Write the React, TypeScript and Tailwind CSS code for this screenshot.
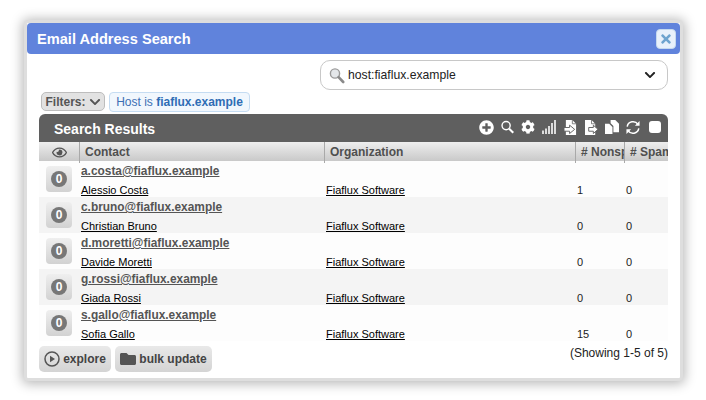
import React from "react";
import { FaChevronDown, FaCog, FaFolder, FaPlusCircle, FaRegEye, FaTimes } from "react-icons/fa";

const contacts = [
  { email: "a.costa@fiaflux.example", name: "Alessio Costa", nonspam: "1", spam: "0" },
  { email: "c.bruno@fiaflux.example", name: "Christian Bruno", nonspam: "0", spam: "0" },
  { email: "d.moretti@fiaflux.example", name: "Davide Moretti", nonspam: "0", spam: "0" },
  { email: "g.rossi@fiaflux.example", name: "Giada Rossi", nonspam: "0", spam: "0" },
  { email: "s.gallo@fiaflux.example", name: "Sofia Gallo", nonspam: "15", spam: "0" },
];

const columns = "grid grid-cols-[40px_245px_251px_49px_44px]";

const Glass = () => (
  <svg width="16" height="17" viewBox="0 0 16 17" className="shrink-0">
    <circle cx="6" cy="6.5" r="4.6" fill="#e4e7ea" stroke="#9a9a9a" strokeWidth="1.4" />
    <path d="M9.6 10.2 14.2 15" stroke="#8a8a8a" strokeWidth="2.6" strokeLinecap="round" />
  </svg>
);

const Signal = () => (
  <svg width="14" height="14" viewBox="0 0 14 14" fill="#dcdcdc">
    <path d="M0 10.500h2V14H0zM3 8.500h2V14H3zM6 6h2v8H6zM9 3h2v11H9zM12 0h2v14h-2z" />
  </svg>
);

const FileIn = () => (
  <svg width="13" height="15" viewBox="0 0 14 16" className="ml-[1px]">
    <path d="M2 0h7l4 4v12H2z" fill="#fff" />
    <path d="M9 0v4h4" fill="none" stroke="#5f5f5f" strokeWidth="0.800" />
    <path d="M0 8h6V5.500L11.500 10 6 14.500V12H0z" fill="#fff" stroke="#5f5f5f" strokeWidth="1" />
  </svg>
);

const FileOut = () => (
  <svg width="13" height="15" viewBox="0 0 14 16" className="ml-[1px]">
    <path d="M0 0h7l4 4v12H0z" fill="#fff" />
    <path d="M7 0v4h4" fill="none" stroke="#5f5f5f" strokeWidth="0.800" />
    <path d="M4 8h5V5.500L14 10l-5 4.500V12H4z" fill="#fff" stroke="#5f5f5f" strokeWidth="1" />
  </svg>
);

const Copies = () => (
  <svg width="14" height="14" viewBox="0 0 15 15" fill="#fff">
    <path d="M0 4h4.500L8 7.500V15H0z" />
    <path d="M6 0h5l4 4v9H9V6.500L6 3.500z" />
  </svg>
);

const Refresh = () => (
  <svg width="14" height="15" viewBox="0 0 15 15" fill="none" stroke="#fff" strokeWidth="1.600">
    <path d="M12.800 4.200A6.300 6.300 0 0 0 1.300 6.500" />
    <path d="M2.200 10.800A6.300 6.300 0 0 0 13.700 8.500" />
    <path d="M14.500 0.500v5h-5z" fill="#fff" stroke="none" />
    <path d="M0.500 14.500v-5h5z" fill="#fff" stroke="none" />
  </svg>
);

const PlayCircle = () => (
  <svg width="16" height="16" viewBox="0 0 16 16" fill="none">
    <circle cx="8" cy="8" r="7" stroke="#555" strokeWidth="1.500" />
    <path d="M6 4.800v6.400L11 8z" fill="#555" />
  </svg>
);

const Row = ({ contact, shaded }: { contact: (typeof contacts)[number]; shaded: boolean }) => (
  <div className={`${columns} h-[36px] ${shaded ? "bg-[#f4f4f4]" : "bg-[#fdfdfd]"}`}>
    <div className="pl-[7px] pt-[5px]">
      <div className="flex h-[26px] w-[26px] items-center justify-center rounded-[4px] bg-gradient-to-b from-[#efefef] to-[#d2d2d2]">
        <span className="flex h-[16px] w-[16px] items-center justify-center rounded-full bg-[#777] text-[12px] font-bold leading-none text-white">0</span>
      </div>
    </div>
    <div className="pl-[2px]">
      <div className="h-[21px] pt-[1px] text-[11.900px] font-bold leading-[19px] text-[#555] underline">{contact.email}</div>
      <div className="text-[11px] leading-[17px] text-black underline">{contact.name}</div>
    </div>
    <div className="pl-[2px] pt-[21px] text-[11px] leading-[17px] text-black underline">Fiaflux Software</div>
    <div className="pl-[2px] pt-[21px] text-[11px] leading-[17px] text-[#222]">{contact.nonspam}</div>
    <div className="pl-[2px] pt-[21px] text-[11px] leading-[17px] text-[#222]">{contact.spam}</div>
  </div>
);

export default function App() {
  return (
    <div className="h-[400px] w-[706px] bg-white pl-[24px] pt-[20px] font-['Liberation_Sans',Arial,sans-serif]">
      <div className="h-[361px] w-[659px] rounded-[4px] border-[3px] border-[#dedede] bg-white shadow-[0_1px_12px_2px_rgba(0,0,0,0.28)]">
        {/* Title bar */}
        <div className="flex h-[31px] items-center justify-between rounded-[4px] bg-[#6083dc] pl-[10px] pr-[4px]">
          <span className="pt-[3px] text-[14.600px] font-bold text-white">Email Address Search</span>
          <button className="flex h-[20px] w-[20px] items-center justify-center rounded-[4px] border border-[#c5d9ee] bg-[#e8f1fb] text-[#6ea4cf]">
            <FaTimes size={14} />
          </button>
        </div>

        <div className="pl-[12px] pr-[12px]">
          {/* Search box */}
          <div className="mt-[6px] flex justify-end">
            <div className="flex h-[30px] w-[348px] items-center rounded-[10px] border border-[#c8c8c8] bg-white pl-[8px] pr-[11px]">
              <Glass />
              <span className="ml-[3px] flex-1 text-[12.200px] text-[#222]">host:fiaflux.example</span>
              <FaChevronDown size={12} className="text-[#222]" />
            </div>
          </div>

          {/* Filters */}
          <div className="mt-[2px] flex h-[20px] items-start pl-[2px]">
            <button className="flex h-[19px] w-[64px] items-center justify-center gap-[3px] rounded-[5px] border border-[#bdbdbd] bg-[#e2e2e2] text-[12px] font-bold text-[#555]">
              Filters:
              <FaChevronDown size={12} />
            </button>
            <span className="ml-[4px] flex h-[20px] w-[141px] items-center justify-center rounded-[4px] border border-[#c5dcf2] bg-[#f1f7fd] text-[12px] text-[#3d6fb4]">
              Host is&nbsp;<b className="text-[#2f6db5]">fiaflux.example</b>
            </span>
          </div>

          {/* Results */}
          <div className="mt-[2px] w-[629px]">
            <div className="flex h-[28px] items-center justify-between rounded-t-[6px] bg-[#5f5f5f] pl-[15px] pr-[7px]">
              <span className="pt-[2px] text-[14px] font-bold text-white">Search Results</span>
              <div className="flex items-center gap-[7px] pb-[2px]">
                <FaPlusCircle size={15} className="text-white" />
                <svg width="13" height="14" viewBox="0 0 14 14" fill="none" stroke="#fff" strokeWidth="1.500">
                  <circle cx="5.500" cy="5.500" r="4.400" />
                  <path d="m8.800 8.800 4.400 4.400" strokeWidth="2.200" />
                </svg>
                <FaCog size={14} className="text-white" />
                <Signal />
                <FileIn />
                <FileOut />
                <Copies />
                <Refresh />
                <span className="ml-[2px] h-[12px] w-[12px] rounded-[3px] bg-white" />
              </div>
            </div>
            <div className={`${columns} h-[19px] bg-gradient-to-b from-[#eeeeee] to-[#c9c9c9] text-[12px] font-bold leading-[21px] text-[#4f4f4f]`}>
              <div className="flex items-center justify-center"><FaRegEye size={15} className="text-[#555]" /></div>
              <div className="border-l border-[#a9a9a9] pl-[5px]">Contact</div>
              <div className="border-l border-[#a9a9a9] pl-[5px]">Organization</div>
              <div className="overflow-hidden whitespace-nowrap border-l border-[#a9a9a9] pl-[5px]"># Nonspam</div>
              <div className="overflow-hidden whitespace-nowrap border-l border-[#a9a9a9] pl-[5px]"># Spam</div>
            </div>
            {contacts.map((c, i) => (
              <Row key={c.email} contact={c} shaded={i % 2 === 1} />
            ))}
          </div>

          {/* Footer */}
          <div className="mt-[5px] flex w-[629px] items-start justify-between">
            <div className="flex gap-[4px]">
              <button className="flex h-[26px] w-[72px] items-center justify-center gap-[3px] rounded-[5px] bg-gradient-to-b from-[#e9e9e9] to-[#d4d4d4] text-[12px] font-bold text-[#444]">
                <PlayCircle />
                explore
              </button>
              <button className="flex h-[26px] w-[97px] items-center justify-center gap-[3px] rounded-[5px] bg-gradient-to-b from-[#e9e9e9] to-[#d4d4d4] text-[12px] font-bold text-[#444]">
                <FaFolder size={16} className="text-[#555]" />
                bulk update
              </button>
            </div>
            <span className="text-[12px] leading-[14px] text-[#222]">(Showing 1-5 of 5)</span>
          </div>
        </div>
      </div>
    </div>
  );
}
